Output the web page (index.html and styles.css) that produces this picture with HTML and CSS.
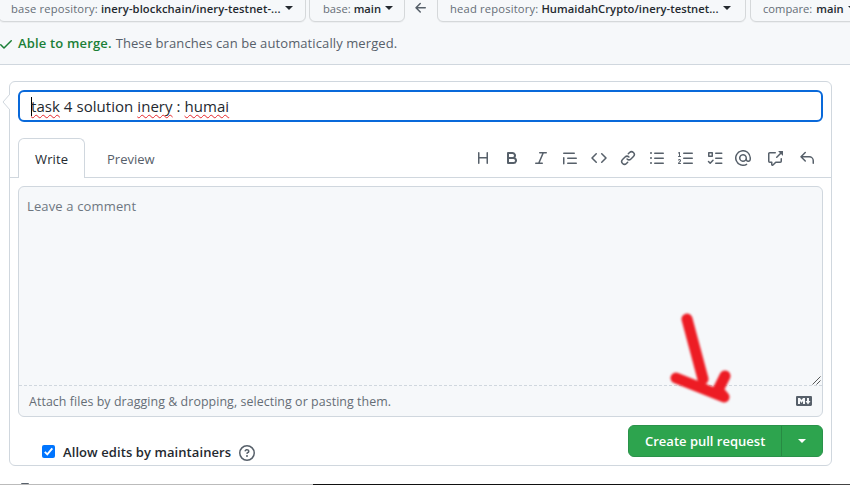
FILE: index.html
```html
<!DOCTYPE html>
<html lang="en">
<head>
<meta charset="utf-8">
<title>Open a pull request</title>
<link rel="stylesheet" href="styles.css">
</head>
<body>
<header class="range">
  <div class="pickers">
    <button class="picker p-base-repo"><span class="lbl wide-lbl">base repository:</span><b class="v1">inery-blockchain/inery-testnet-...</b><i class="caret"></i></button>
    <button class="picker p-base"><span class="lbl">base:</span><b>main</b><i class="caret"></i></button>
    <svg class="arrow" viewBox="0 0 16 16"><path d="M7.78 12.53a.75.75 0 01-1.06 0L2.47 8.28a.75.75 0 010-1.06l4.25-4.25a.75.75 0 011.06 1.06L4.81 7h7.44a.75.75 0 010 1.5H4.81l2.97 2.97a.75.75 0 010 1.06z"/></svg>
    <button class="picker p-head-repo"><span class="lbl wide-lbl">head repository:</span><b class="v2">HumaidahCrypto/inery-testnet...</b><i class="caret"></i></button>
    <button class="picker p-compare"><span class="lbl">compare:</span><b>main</b><i class="caret"></i></button>
  </div>
  <p class="merge">
    <svg class="check" viewBox="0 0 16 16"><path d="M13.78 4.22a.75.75 0 010 1.06l-7.25 7.25a.75.75 0 01-1.06 0L2.22 9.28a.75.75 0 011.06-1.06L6 10.94l6.72-6.72a.75.75 0 011.06 0z"/></svg>
    <strong>Able to merge.</strong><span class="merge-note">These branches can be automatically merged.</span>
  </p>
</header>

<main class="card">
  <svg class="notch" viewBox="0 0 8 16"><path d="M8 0L1 8l7 8" /></svg>
  <div class="title"><i class="cursor"></i><span class="title-text"><u>task</u> 4 solution <u>inery</u> : <u>humai</u></span></div>
  <div class="tabs">
    <div class="tab active"><span class="t-write">Write</span></div>
    <div class="tab"><span class="t-preview">Preview</span></div>
    <div class="tools">
      <svg viewBox="0 0 16 16"><path d="M3.75 2a.75.75 0 01.75.75V7h7V2.75a.75.75 0 011.5 0v10.5a.75.75 0 01-1.5 0V8.5h-7v4.75a.75.75 0 01-1.5 0V2.75A.75.75 0 013.75 2z"/></svg>
      <svg viewBox="0 0 16 16"><path fill-rule="evenodd" d="M4 2a1 1 0 00-1 1v10a1 1 0 001 1h5.5a3.5 3.5 0 001.852-6.47A3.5 3.5 0 008.5 2H4zm4.5 5a1.5 1.5 0 100-3H5v3h3.5zM5 9v3h4.5a1.5 1.5 0 000-3H5z"/></svg>
      <svg viewBox="0 0 16 16"><path d="M6 2.75A.75.75 0 016.75 2h6.5a.75.75 0 010 1.5h-2.505l-3.858 9H9.25a.75.75 0 010 1.5h-6.5a.75.75 0 010-1.5h2.505l3.858-9H6.75A.75.75 0 016 2.75z"/></svg>
      <svg viewBox="0 0 16 16"><path d="M1.75 2.5a.75.75 0 000 1.5h10.5a.75.75 0 000-1.5H1.75zm4 5a.75.75 0 000 1.5h8.5a.75.75 0 000-1.5h-8.5zm0 5a.75.75 0 000 1.5h8.5a.75.75 0 000-1.5h-8.5zM2.5 7.75a.75.75 0 00-1.5 0v6a.75.75 0 001.5 0v-6z"/></svg>
      <svg viewBox="0 0 16 16"><path d="M4.72 3.22a.75.75 0 011.06 1.06L2.06 8l3.72 3.72a.75.75 0 11-1.06 1.06L.47 8.53a.75.75 0 010-1.06l4.25-4.25zm6.56 0a.75.75 0 10-1.06 1.06L13.94 8l-3.72 3.72a.75.75 0 101.06 1.06l4.25-4.25a.75.75 0 000-1.06l-4.25-4.25z"/></svg>
      <svg viewBox="0 0 16 16"><path d="M7.775 3.275a.75.75 0 001.06 1.06l1.25-1.25a2 2 0 112.83 2.83l-2.5 2.5a2 2 0 01-2.83 0 .75.75 0 00-1.06 1.06 3.5 3.5 0 004.95 0l2.5-2.5a3.5 3.5 0 00-4.95-4.95l-1.25 1.25zm-4.69 9.64a2 2 0 010-2.83l2.5-2.5a2 2 0 012.83 0 .75.75 0 001.06-1.06 3.5 3.5 0 00-4.95 0l-2.5 2.5a3.5 3.5 0 004.95 4.95l1.25-1.25a.75.75 0 00-1.06-1.06l-1.25 1.25a2 2 0 01-2.83 0z"/></svg>
      <svg viewBox="0 0 16 16"><path d="M2 4a1 1 0 100-2 1 1 0 000 2zm3.75-1.5a.75.75 0 000 1.5h8.5a.75.75 0 000-1.5h-8.5zm0 5a.75.75 0 000 1.5h8.5a.75.75 0 000-1.5h-8.5zm0 5a.75.75 0 000 1.5h8.5a.75.75 0 000-1.5h-8.5zM3 8a1 1 0 11-2 0 1 1 0 012 0zm-1 6a1 1 0 100-2 1 1 0 000 2z"/></svg>
      <svg viewBox="0 0 16 16"><path d="M2.003 2.5a.5.5 0 00-.723-.447l-1.003.5a.5.5 0 00.446.895l.28-.14V6H.5a.5.5 0 000 1h2.006a.5.5 0 100-1h-.503V2.5zM5 3.25a.75.75 0 01.75-.75h8.5a.75.75 0 010 1.5h-8.5A.75.75 0 015 3.25zm0 5a.75.75 0 01.75-.75h8.5a.75.75 0 010 1.5h-8.5A.75.75 0 015 8.25zm0 5a.75.75 0 01.75-.75h8.5a.75.75 0 010 1.5h-8.5a.75.75 0 01-.75-.75zM.924 10.32l.003-.004a.851.851 0 01.144-.153A.66.66 0 011.5 10c.195 0 .306.068.374.146a.57.57 0 01.128.376c0 .453-.269.682-.8 1.078l-.035.025C.692 11.98 0 12.495 0 13.5a.5.5 0 00.5.5h2.003a.5.5 0 000-1H1.146c.132-.197.351-.372.654-.597l.047-.035c.47-.35 1.156-.858 1.156-1.845 0-.365-.118-.744-.377-1.038-.268-.303-.658-.484-1.126-.484-.48 0-.84.202-1.068.392a1.858 1.858 0 00-.348.384.5.5 0 00.841.543z"/></svg>
      <svg viewBox="0 0 16 16"><g class="line"><path d="M1.75 2.75h3.5v3.5h-3.5z"/><path d="M8.75 3.25h6M8.75 8.25h6M8.75 13.25h6M1.5 11.5l1.7 1.7L6 10.2"/></g></svg>
      <svg class="near" viewBox="0 0 16 16"><path fill-rule="evenodd" d="M4.75 2.37a6.5 6.5 0 006.5 11.26.75.75 0 01.75 1.298 8 8 0 113.994-7.273.754.754 0 01.006.095v1.5a2.75 2.75 0 01-5.072 1.475A4 4 0 1112 8v1.25a1.25 1.25 0 002.5 0V7.867a6.5 6.5 0 00-9.75-5.496V2.37zM10.5 8a2.5 2.5 0 10-5 0 2.5 2.5 0 005 0z"/></svg>
      <svg class="wide" viewBox="0 0 16 16"><path d="M16 1.25v4.146a.25.25 0 01-.427.177L14.03 4.03l-3.75 3.75a.75.75 0 11-1.06-1.06l3.75-3.75-1.543-1.543A.25.25 0 0111.604 1h4.146a.25.25 0 01.25.25zM2.75 3.5a.25.25 0 00-.25.25v7.5c0 .138.112.25.25.25h2a.75.75 0 01.75.75v2.19l2.72-2.72a.75.75 0 01.53-.22h4.5a.25.25 0 00.25-.25v-2.5a.75.75 0 111.5 0v2.5A1.75 1.75 0 0113.25 13H9.06l-2.573 2.573A1.457 1.457 0 014 14.543V13H2.75A1.75 1.75 0 011 11.25v-7.5C1 2.784 1.784 2 2.75 2h5.5a.75.75 0 010 1.5h-5.5z"/></svg>
      <svg class="wide" viewBox="0 0 16 16"><path d="M6.78 1.97a.75.75 0 010 1.06L3.81 6h6.44A4.75 4.75 0 0115 10.75v2.5a.75.75 0 01-1.5 0v-2.5a3.25 3.25 0 00-3.25-3.25H3.81l2.97 2.97a.75.75 0 11-1.06 1.06L1.47 7.28a.75.75 0 010-1.06l4.25-4.25a.75.75 0 011.06 0z"/></svg>
    </div>
  </div>
  <section class="comment">
    <div class="area"><span class="placeholder">Leave a comment</span>
      <svg class="grip" viewBox="0 0 9 9"><path d="M.5 8.5l8-8M4.5 8.5l4-4"/></svg>
    </div>
    <div class="attach"><span class="attach-text">Attach files by dragging &amp; dropping, selecting or pasting them.</span>
      <svg class="md" viewBox="0 0 16 16"><path fill-rule="evenodd" d="M14.85 3H1.15C.52 3 0 3.52 0 4.15v7.69C0 12.48.52 13 1.15 13h13.69c.64 0 1.15-.52 1.15-1.15v-7.7C16 3.52 15.48 3 14.85 3zM9 11H7V8L5.5 9.92 4 8v3H2V5h2l1.5 2L7 5h2v6zm2.99.5L9.5 8H11V5h2v3h1.5l-2.51 3.5z"/></svg>
    </div>
  </section>
  <div class="actions">
    <label class="allow">
      <svg class="box" viewBox="0 0 13 13"><rect width="13" height="13" rx="2"/><path d="M2.8 6.8l2.5 2.6L10.3 3.4"/></svg>
      <span class="allow-text">Allow edits by maintainers</span>
      <svg class="help" viewBox="0 0 16 16"><path fill-rule="evenodd" d="M8 1.5a6.5 6.5 0 100 13 6.5 6.5 0 000-13zM0 8a8 8 0 1116 0A8 8 0 010 8zm9 3a1 1 0 11-2 0 1 1 0 012 0zM6.92 6.085c.081-.16.19-.299.34-.398.145-.097.371-.187.74-.187.28 0 .553.087.738.225A.613.613 0 019 6.25c0 .177-.04.264-.077.318a.956.956 0 01-.277.245c-.076.051-.158.1-.258.161l-.007.004a7.728 7.728 0 00-.313.195 2.416 2.416 0 00-.692.661.75.75 0 001.248.832.956.956 0 01.276-.245 6.3 6.3 0 01.26-.16l.007-.004c.093-.057.204-.123.313-.195.222-.149.487-.355.692-.662.214-.32.329-.702.329-1.15 0-.76-.36-1.348-.863-1.725A2.76 2.76 0 008 4c-.631 0-1.155.16-1.572.438-.413.276-.68.638-.849.977a.75.75 0 101.342.67z"/></svg>
    </label>
    <div class="create"><button class="create-main"><span class="create-text">Create pull request</span></button><button class="create-more"><i class="caret"></i></button></div>
  </div>
  <svg class="scribble" viewBox="0 0 80 110"><path d="M27 19L43 79M16 78L64 97M65 76L58 90L64 97"/></svg>
</main>
<footer class="edge"><i class="dot"></i></footer>
</body>
</html>
```
FILE: styles.css
```css
* { box-sizing: border-box; }
body {
  margin: 0; width: 850px; height: 485px; overflow: hidden;
  display: flex; flex-direction: column;
  font-family: "Open Sans", "Noto Sans", sans-serif;
  font-size: 13px; color: #24292f; background: #fff;
}
button { font: inherit; margin: 0; padding: 0; }
span, b, strong { white-space: nowrap; }
svg { flex: none; fill: #57606a; display: block; }

.range { height: 65px; flex: none; background: #f6f8fa; border-bottom: 1px solid #d0d7de; overflow: hidden; }
.pickers { display: flex; align-items: flex-start; margin-top: -8px; width: 900px; }
.picker {
  flex: none; height: 30px; border: 1px solid #d5d8da; border-radius: 6px; background: #f6f8fa;
  box-shadow: 0 1px 0 rgba(27,31,36,.04);
  display: flex; align-items: center; padding: 2px 0 0 12px; font-size: 11.2px; color: #24292f;
}
.lbl { color: #656d76; margin-right: 3px; }
.wide-lbl { letter-spacing: .18px; }
.picker b { font-weight: 600; }
.v1 { letter-spacing: .1px; }
.v2 { letter-spacing: .04px; }
.caret { width: 0; height: 0; border: 4px solid transparent; border-top-color: currentColor; border-bottom: 0; margin-left: 4px; }
.p-base-repo { width: 308px; margin-left: -2px; }
.p-base { width: 96px; margin-left: 3px; padding-left: 13px; }
.arrow { width: 16px; height: 16px; margin: 8px 8px 0; }
.p-head-repo { width: 309px; }
.p-compare { width: 110px; margin-left: 4px; }
.p-compare .lbl { margin-right: 4px; }
.merge { margin: 0; height: 42px; display: flex; align-items: center; line-height: 20px; color: #57606a; }
.check { width: 16px; height: 16px; margin: 2px 4px 0 -2px; fill: #1a7f37; }
.merge strong { color: #1a7f37; font-weight: 600; margin-right: 4px; letter-spacing: .16px; }
.merge-note { letter-spacing: .1px; }

.card { position: relative; flex: none; width: 823px; height: 385px; margin: 16px 0 0 9px; border: 1px solid #d0d7de; border-radius: 6px; }
.notch { position: absolute; left: -8px; top: 12px; width: 8px; height: 16px; fill: #fff; stroke: #d0d7de; }
.title { height: 32px; margin: 8px 8px 0; border: 2px solid #0969da; border-radius: 6px; display: flex; align-items: center; padding-left: 11px; font-size: 15px; }
.title-text { letter-spacing: .05px; }
.cursor { width: 1px; height: 19px; background: #000; margin-right: -1px; }
.title u { text-decoration: underline wavy #e5262b 1px; text-decoration-skip-ink: none; text-underline-offset: 2px; }
.tabs { display: flex; height: 40px; margin-top: 16px; padding-left: 8px; border-bottom: 1px solid #d0d7de; }
.tab { height: 40px; padding: 1px 16px 0; display: flex; align-items: center; color: #57606a; }
.tab.active { width: 67px; margin-right: 6px; background: #fff; color: #24292f; border: 1px solid #d0d7de; border-bottom: 0; border-radius: 6px 6px 0 0; letter-spacing: .15px; }
.tools { display: flex; align-items: center; gap: 13px; margin: 0 16px 0 auto; }
.tools svg { width: 16px; height: 16px; }
.tools .near { margin-left: -1px; }
.tools .wide { margin-left: 3px; }
.line { fill: none; stroke: #57606a; stroke-width: 1.5; stroke-linecap: round; stroke-linejoin: round; }
.comment { height: 231px; margin: 8px 8px 0; border: 1px solid #d0d7de; border-radius: 6px; background: #f6f8fa; color: #656d76; }
.area { height: 199px; display: flex; justify-content: space-between; align-items: flex-start; padding: 9px 1px 0 8px; border-bottom: 1px dashed #d0d7de; }
.placeholder { line-height: 20px; color: #6e7781; letter-spacing: .14px; }
.grip { width: 9px; height: 9px; align-self: flex-end; fill: none; stroke: #444; stroke-width: .9; }
.attach { height: 30px; display: flex; align-items: center; justify-content: space-between; padding: 0 10px; }
.attach-text { font-size: 12.4px; letter-spacing: .07px; }
.md { width: 16px; height: 16px; }
.actions { display: flex; justify-content: space-between; margin: 8px 8px 0 32px; }
.allow { display: flex; align-items: center; height: 32px; margin-top: 11px; font-weight: 600; }
.allow-text { letter-spacing: .08px; }
.box { width: 13px; height: 13px; margin: 0 8px 2px 0; fill: #0075ff; }
.box path { fill: none; stroke: #fff; stroke-width: 1.9; }
.help { width: 16px; height: 16px; margin: 2px 0 0 8px; }
.create { display: flex; width: 195px; height: 32px; border: 1px solid #2a924a; border-radius: 6px; background: #2da44e; overflow: hidden; }
.create button { border: 0; background: none; color: #fff; font-weight: 600; display: flex; align-items: center; }
.create .create-main { width: 153px; padding-left: 16px; border-right: 1px solid #278a43; }
.create .create-more { flex: 1; justify-content: center; }
.create .caret { margin: 0; }
.scribble { position: absolute; left: 650px; top: 218px; width: 80px; height: 110px; fill: none; stroke: #ed1c24; stroke-width: 11; stroke-linecap: round; stroke-linejoin: round; filter: blur(1.3px); }
.edge { position: relative; margin-top: auto; height: 1px; background: linear-gradient(90deg, #bbb 313px, #111 313px, #111 830px, #444 830px); }
.dot { position: absolute; left: 21px; top: -1px; width: 8px; height: 1px; border-radius: 4px 4px 0 0; background: #57606a; }
```
